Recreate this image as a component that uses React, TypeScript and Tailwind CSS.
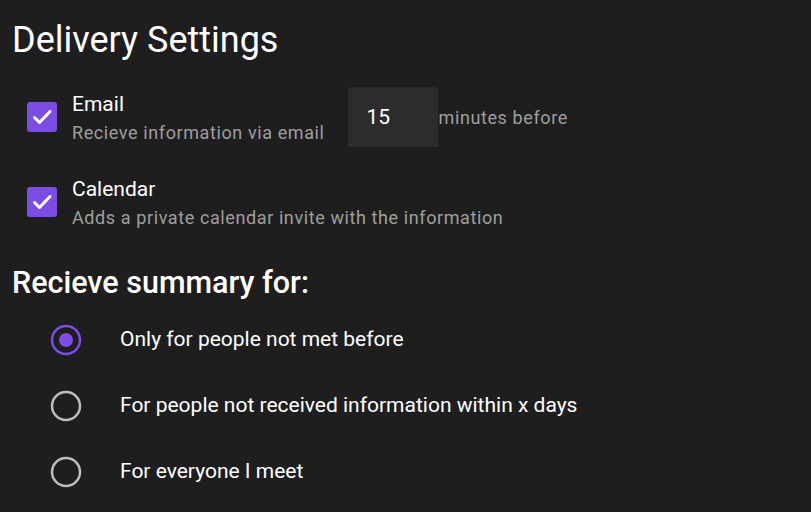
import React, { useState } from 'react';

const options = [
  'Only for people not met before',
  'For people not received information within x days',
  'For everyone I meet',
];

const CheckBox = ({ checked }: { checked: boolean }) => {
  return (
    <div
      className={
        'w-[30px] h-[30px] rounded-[3px] flex items-center justify-center shrink-0 ' +
        (checked ? 'bg-[#7b4de4]' : 'border-2 border-[#bdbdbd]')
      }
    >
      {checked && (
        <svg width="30" height="30" viewBox="0 0 30 30">
          <path
            d="M7.5 15.5 L12.5 20.5 L23 9.5"
            fill="none"
            stroke="#ffffff"
            strokeWidth="3"
            strokeLinecap="round"
            strokeLinejoin="round"
          />
        </svg>
      )}
    </div>
  );
};

const Radio = ({ checked }: { checked: boolean }) => {
  return (
    <svg width="32" height="32" viewBox="0 0 32 32" className="shrink-0">
      <circle
        cx="16"
        cy="16"
        r="14"
        fill="none"
        stroke={checked ? '#7b4de4' : '#bdbdbd'}
        strokeWidth="2.5"
      />
      {checked && <circle cx="16" cy="16" r="7" fill="#7b4de4" />}
    </svg>
  );
};

const SettingRow = ({
  title,
  description,
  children,
}: {
  title: string;
  description: string;
  children?: React.ReactNode;
}) => {
  return (
    <div className="flex items-center h-[60px]">
      <div className="ml-[15px]">
        <CheckBox checked />
      </div>
      <div className="ml-[15px] flex flex-col pt-[2px]">
        <span className="text-[21px] leading-[28px] text-white">{title}</span>
        <span className="pt-[1px] text-[18px] leading-[28px] tracking-[0.6px] text-[#9e9e9e]">
          {description}
        </span>
      </div>
      {children}
    </div>
  );
};

export default function App() {
  const [selected] = useState(0);

  return (
    <div
      className="w-[811px] h-[512px] overflow-hidden bg-[#1e1e1e] pl-3"
      style={{ fontFamily: 'Roboto, "Noto Sans", sans-serif' }}
    >
      <h1 className="pt-[19px] text-[36px] leading-[42px] text-white">Delivery Settings</h1>

      <div className="mt-[26px]">
        <SettingRow title="Email" description="Recieve information via email">
          <div className="ml-[23px] w-[90px] h-[60px] rounded-t-[4px] bg-[#2c2c2c] flex items-center pl-[19px] pt-[2px]">
            <span className="text-[21px] text-white">15</span>
          </div>
          <span className="ml-px text-[18px] text-[#9e9e9e] tracking-[0.6px]">
            minutes before
          </span>
        </SettingRow>
      </div>

      <div className="mt-[25px]">
        <SettingRow
          title="Calendar"
          description="Adds a private calendar invite with the information"
        />
      </div>

      <h2 className="mt-[34px] text-[30.5px] leading-[34px] font-medium text-white">
        Recieve summary for:
      </h2>

      <div className="mt-[7px] flex flex-col">
        {options.map((option, i) => (
          <div key={'option' + i} className="flex items-center h-[66px]">
            <div className="ml-[38px]">
              <Radio checked={i === selected} />
            </div>
            <span className="ml-[38px] text-[21px] text-white">{option}</span>
          </div>
        ))}
      </div>
    </div>
  );
}
